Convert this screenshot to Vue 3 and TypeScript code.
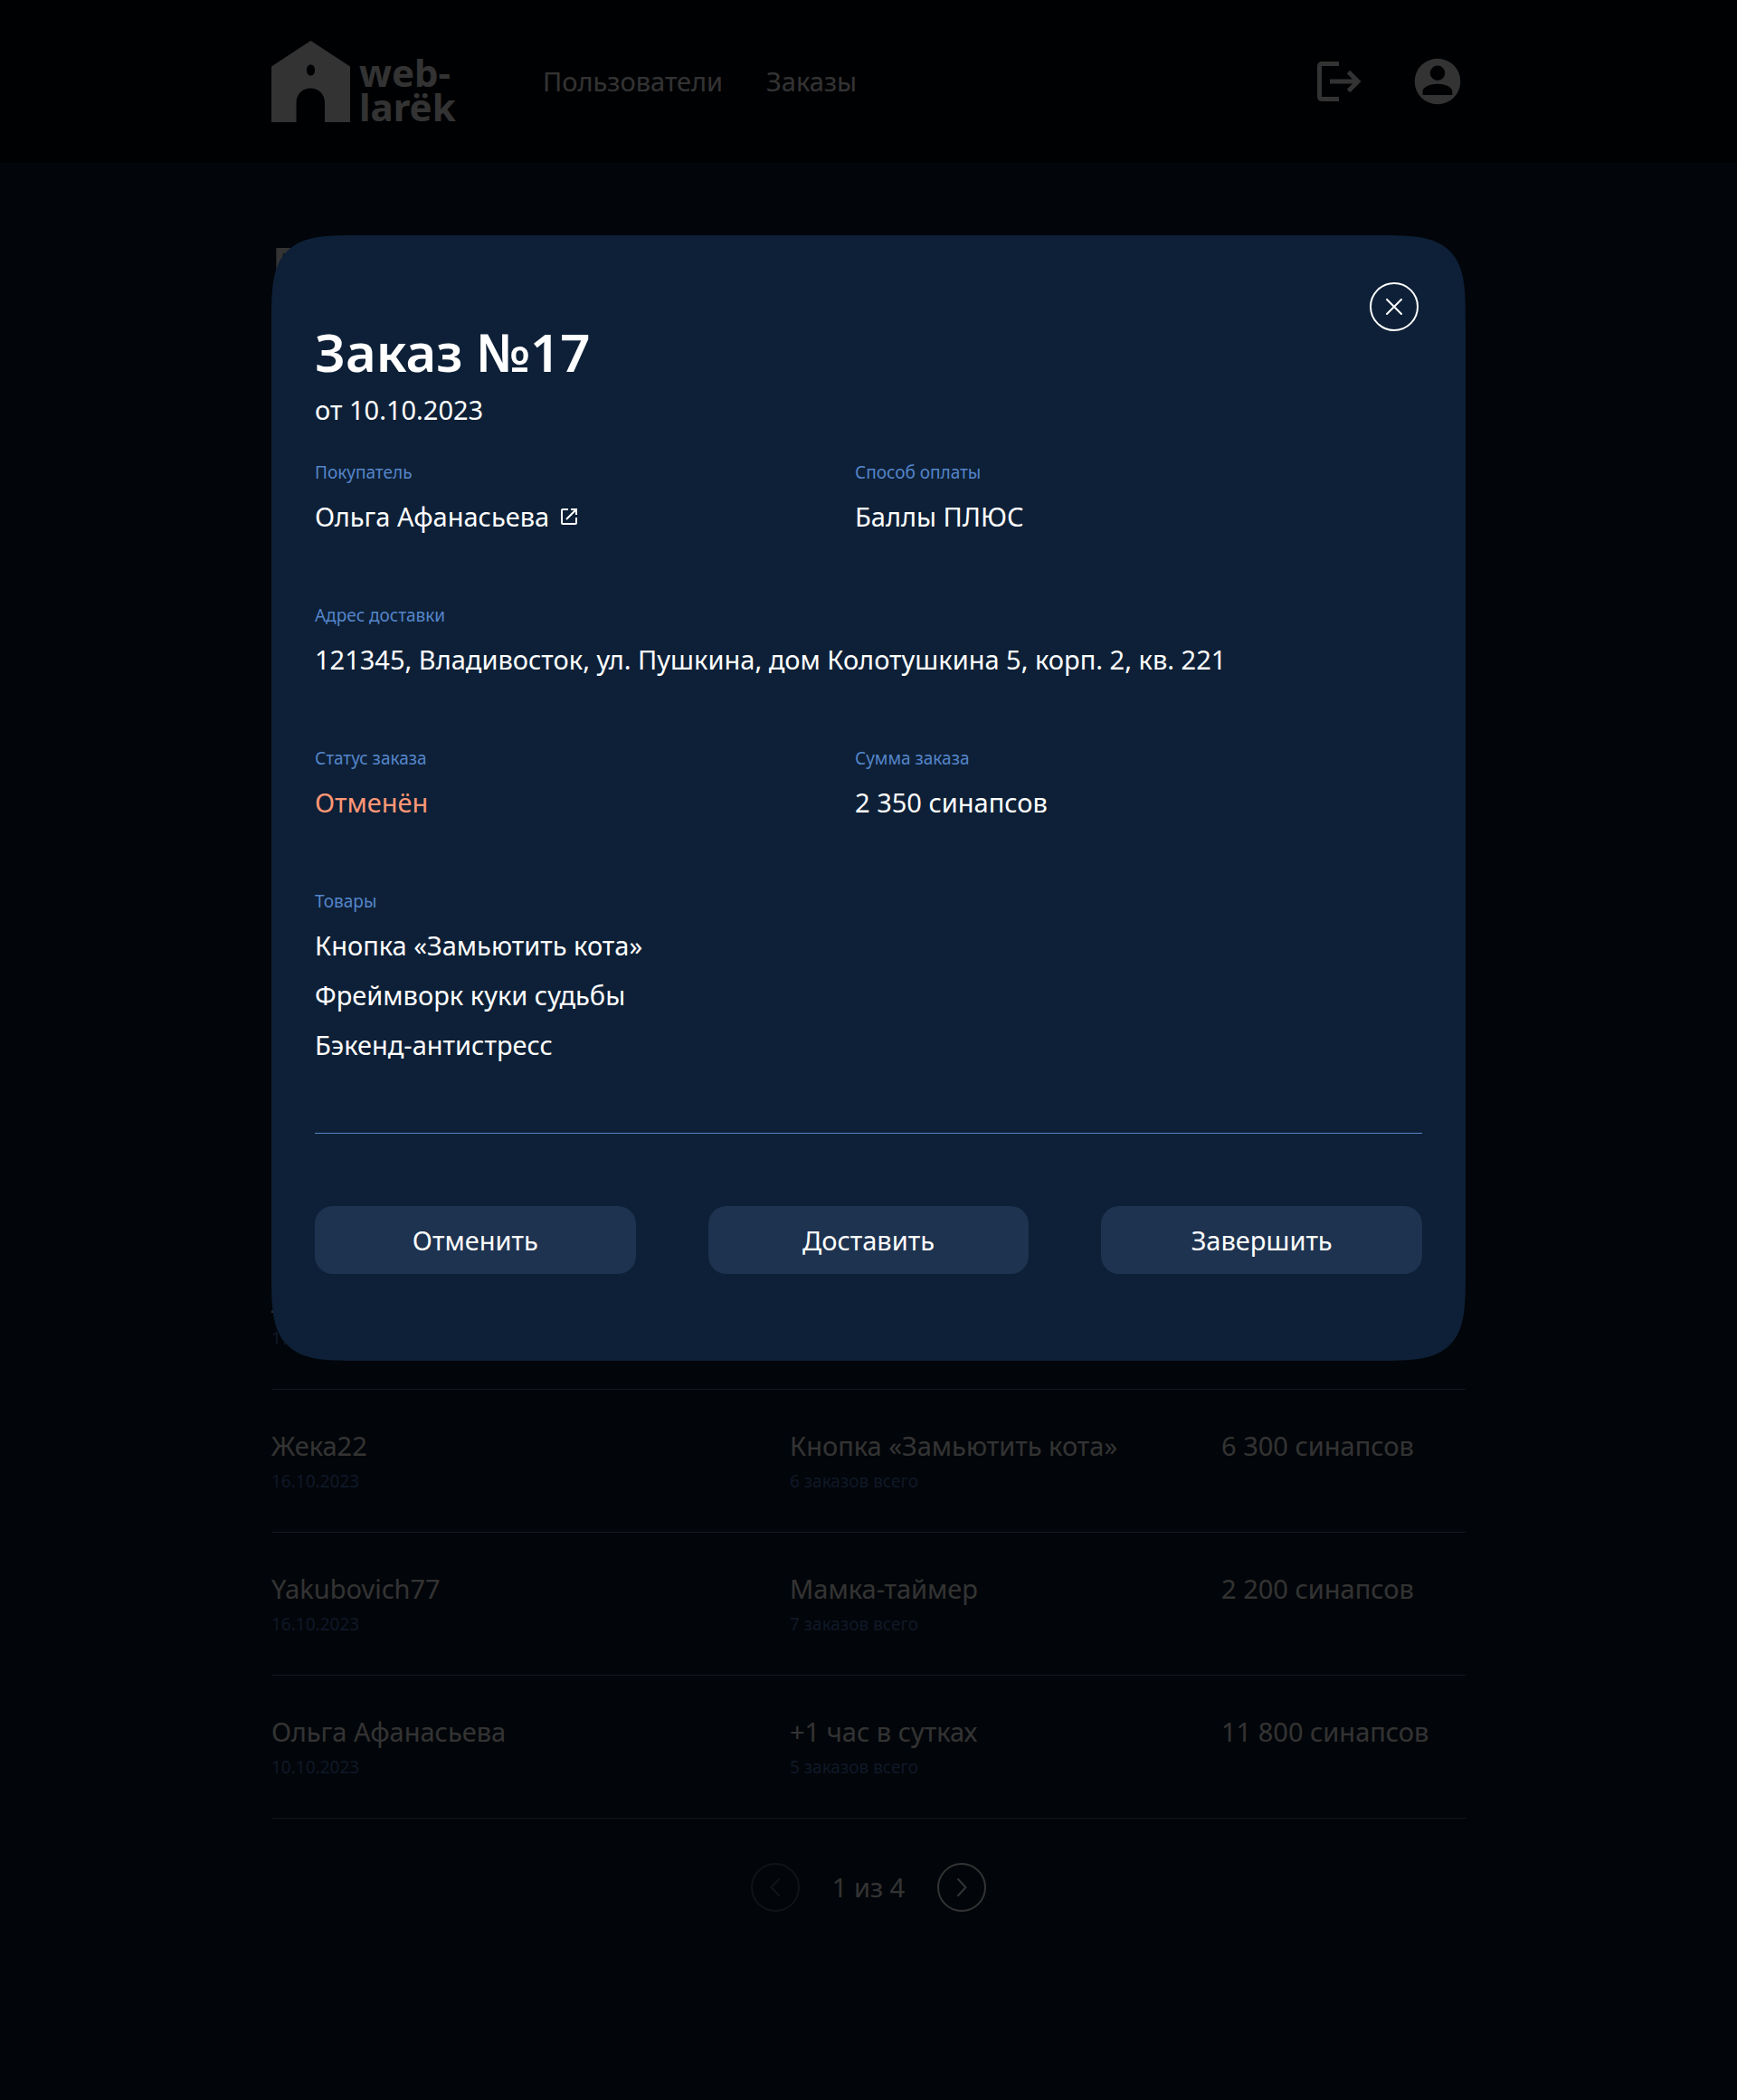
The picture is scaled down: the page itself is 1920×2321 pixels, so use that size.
<script setup lang="ts">
interface Customer {
  name: string
  date: string
  product: string
  orders: string
  total: string
}

interface Field {
  label: string
  value: string
  wide?: boolean
  link?: boolean
  cancelled?: boolean
}

const customers: Customer[] = [
  { name: 'Лиза', date: '17.10.2023', product: 'Мамка-таймер', orders: '6 заказов всего', total: '2 200 синапсов' },
  { name: 'Жека22', date: '16.10.2023', product: 'Кнопка «Замьютить кота»', orders: '6 заказов всего', total: '6 300 синапсов' },
  { name: 'Yakubovich77', date: '16.10.2023', product: 'Мамка-таймер', orders: '7 заказов всего', total: '2 200 синапсов' },
  { name: 'Ольга Афанасьева', date: '10.10.2023', product: '+1 час в сутках', orders: '5 заказов всего', total: '11 800 синапсов' },
]

const fields: Field[] = [
  { label: 'Покупатель', value: 'Ольга Афанасьева', link: true },
  { label: 'Способ оплаты', value: 'Баллы ПЛЮС' },
  { label: 'Адрес доставки', value: '121345, Владивосток, ул. Пушкина, дом Колотушкина 5, корп. 2, кв. 221', wide: true },
  { label: 'Статус заказа', value: 'Отменён', cancelled: true },
  { label: 'Сумма заказа', value: '2 350 синапсов' },
]

const products: string[] = ['Кнопка «Замьютить кота»', 'Фреймворк куки судьбы', 'Бэкенд-антистресс']
const actions: string[] = ['Отменить', 'Доставить', 'Завершить']
</script>

<template>
  <div class="app">
    <header class="header">
      <div class="container header-row">
        <a class="logo" href="#">
          <svg width="87" height="90" viewBox="0 0 87 90" aria-hidden="true">
            <path fill="currentColor" fill-rule="evenodd" d="M43.500 0 87 28.500V90H59V68.500C59 59 52 52.500 43.200 52.500S27.500 59 27.500 68.500V90H0V28.500ZM43.500 26.500C40.500 26.500 39 29 39 32.500S40.500 38.500 43.500 38.500 48 36 48 32.500 46.500 26.500 43.500 26.500Z" />
          </svg>
          <span class="logo-text">web-<br />larëk</span>
        </a>
        <nav class="nav">
          <a href="#">Пользователи</a>
          <a href="#">Заказы</a>
        </nav>
        <div class="tools">
          <button type="button" class="tool" aria-label="Выйти">
            <svg width="60" height="60" viewBox="0 0 60 60" fill="none" stroke="currentColor" stroke-width="5">
              <path d="M30 10.500H11.500Q8.500 10.500 8.500 13.500V46.500Q8.500 49.500 11.500 49.500H30M20 30H51M40.500 19.500 51 30 40.500 40.500" />
            </svg>
          </button>
          <button type="button" class="tool" aria-label="Профиль">
            <svg width="60" height="60" viewBox="0 0 60 60">
              <path fill="currentColor" fill-rule="evenodd" d="M29 4.700A25.300 25.300 0 1 0 29 55.300 25.300 25.300 0 0 0 29 4.700ZM29 12.500A8.200 8.200 0 1 1 29 29 8.200 8.200 0 0 1 29 12.500ZM12.500 45V40.500C13.500 35.500 21 32.700 29 32.700S44.500 35.500 45.300 40.500V45Z" />
            </svg>
          </button>
        </div>
      </div>
    </header>

    <main class="container main">
      <h1 class="page-title">Пользователи</h1>
      <table class="table">
        <colgroup>
          <col class="col-name" />
          <col class="col-product" />
          <col />
        </colgroup>
        <tbody>
          <tr v-for="c in customers" :key="c.name">
            <td><span class="main-text">{{ c.name }}</span><span class="sub-text">{{ c.date }}</span></td>
            <td><span class="main-text">{{ c.product }}</span><span class="sub-text">{{ c.orders }}</span></td>
            <td><span class="main-text">{{ c.total }}</span></td>
          </tr>
        </tbody>
      </table>
      <nav class="pager" aria-label="Страницы">
        <button type="button" class="round" disabled aria-label="Назад">
          <svg width="20" height="20" viewBox="0 0 20 20"><path d="M14 1 5.500 10 14 19" /></svg>
        </button>
        <span>1 из 4</span>
        <button type="button" class="round" aria-label="Вперёд">
          <svg width="20" height="20" viewBox="0 0 20 20"><path d="M6 1 14.500 10 6 19" /></svg>
        </button>
      </nav>
    </main>

    <div class="overlay">
      <section class="container modal" role="dialog" aria-modal="true" aria-labelledby="order-title">
        <button type="button" class="round close" aria-label="Закрыть">
          <svg width="20" height="20" viewBox="0 0 20 20"><path d="M2 2 18 18M18 2 2 18" /></svg>
        </button>
        <h2 id="order-title" class="title">Заказ №17</h2>
        <p class="date">от 10.10.2023</p>
        <dl class="fields">
          <div v-for="f in fields" :key="f.label" :class="{ wide: f.wide }">
            <dt>{{ f.label }}</dt>
            <dd :class="{ cancelled: f.cancelled }">
              <a v-if="f.link" class="customer" href="#">
                {{ f.value }}
                <svg width="20" height="20" viewBox="0 0 20 20" fill="none" stroke="currentColor" stroke-width="2">
                  <path d="M9 2H3Q2 2 2 3V17Q2 18 3 18H17Q18 18 18 17V11M12 2H18V8M18 2 7 13" />
                </svg>
              </a>
              <template v-else>{{ f.value }}</template>
            </dd>
          </div>
          <div class="wide products">
            <dt>Товары</dt>
            <dd v-for="p in products" :key="p">{{ p }}</dd>
          </div>
        </dl>
        <div class="actions">
          <button v-for="a in actions" :key="a" type="button" class="action">{{ a }}</button>
        </div>
      </section>
    </div>
  </div>
</template>

<style>
body {
  margin: 0;
  background: #0b1a30;
}
</style>

<style scoped>
.app {
  position: relative;
  min-height: 100vh;
  background: #0b1a30;
  color: #fff;
  font-family: 'Noto Sans', sans-serif;
  font-size: 29px;
  line-height: 38px;
}

.app * {
  box-sizing: border-box;
}

a {
  color: inherit;
  text-decoration: none;
}

button {
  padding: 0;
  border: 0;
  background: none;
  color: inherit;
  font: inherit;
  cursor: pointer;
}

.container {
  width: calc(100% - 48px);
  max-width: 1320px;
  margin: 0 auto;
}

.header {
  background: #02050f;
}

.header-row {
  display: flex;
  align-items: center;
  height: 180px;
}

.logo {
  display: flex;
  align-items: flex-end;
  gap: 10px;
  width: 300px;
}

.logo-text {
  margin-bottom: -2px;
  font-size: 42px;
  font-weight: 700;
  line-height: 38px;
}

.nav {
  display: flex;
  gap: 48px;
}

.tools {
  display: flex;
  gap: 50px;
  margin-left: auto;
}

.tool {
  width: 60px;
  height: 60px;
}

.tool svg,
.round svg {
  display: block;
}

.main {
  padding: 77px 0 208px;
}

.page-title {
  min-height: 1121px;
  margin: 0;
  font-size: 58px;
  font-weight: 600;
  line-height: 72px;
}

.table {
  width: 100%;
  border-collapse: separate;
  border-spacing: 0;
  table-layout: fixed;
}

.col-name {
  width: 573px;
}

.col-product {
  width: 477px;
}

td {
  height: 158px;
  padding: 43px 0 0;
  border-bottom: 1px solid #6478a4;
  vertical-align: top;
}

tr:last-child td {
  border-color: #6c7078;
}

.main-text,
.sub-text {
  display: block;
}

.sub-text {
  margin-top: 8px;
  color: #4b78c0;
  font-size: 19px;
  line-height: 24px;
}

.pager {
  display: flex;
  justify-content: center;
  align-items: center;
  gap: 36px;
  margin-top: 49px;
}

.round {
  display: flex;
  align-items: center;
  justify-content: center;
  width: 54px;
  height: 54px;
  border: 2px solid currentColor;
  border-radius: 50%;
}

.round:disabled {
  opacity: 0.3;
}

.round path {
  fill: none;
  stroke: currentColor;
  stroke-width: 2;
  stroke-linecap: round;
}

.overlay {
  position: absolute;
  inset: 0;
  padding-top: 260px;
  background: rgba(0, 0, 0, 0.8);
}

.modal {
  position: relative;
  padding: 93px 48px 96px;
  border-radius: 60px;
  background: #0d2037;
}

@supports (corner-shape: squircle) {
  .modal {
    border-radius: 100px;
    corner-shape: superellipse(1.85);
  }
}

.close {
  position: absolute;
  top: 52px;
  right: 52px;
}

.title {
  margin: 0 0 9px;
  font-size: 58px;
  font-weight: 600;
  line-height: 72px;
}

.date {
  margin: 0 0 38px;
}

.fields {
  display: grid;
  grid-template-columns: 597px 1fr;
  row-gap: 78px;
  margin: 0;
}

.wide {
  grid-column: 1 / -1;
}

dt {
  margin-bottom: 18px;
  color: #5585c9;
  font-size: 19px;
  line-height: 24px;
}

dd {
  margin: 0;
}

.products dd + dd {
  margin-top: 17px;
}

.cancelled {
  color: #ff9776;
}

.customer {
  display: inline-flex;
  align-items: center;
  gap: 12px;
}

.actions {
  display: grid;
  grid-template-columns: repeat(3, 1fr);
  gap: 80px;
  margin-top: 78px;
  padding-top: 80px;
  border-top: 1px solid #5585c9;
}

.action {
  height: 75px;
  border-radius: 20px;
  background: #1e3350;
}
</style>
